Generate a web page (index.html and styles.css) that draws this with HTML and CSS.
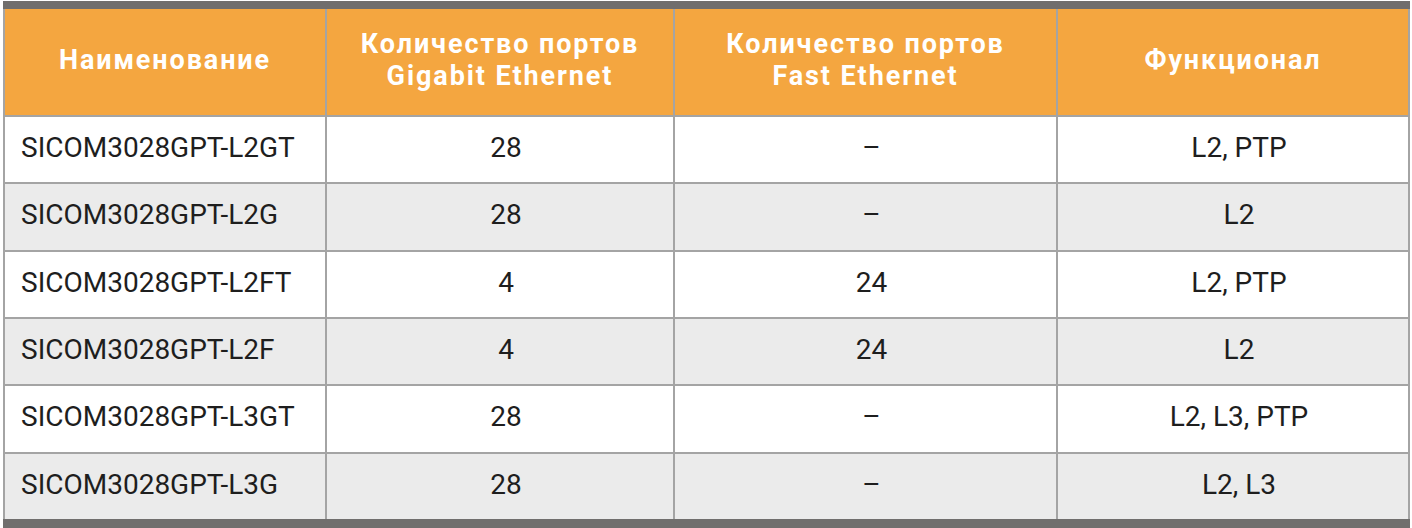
FILE: index.html
```html
<!DOCTYPE html>
<html lang="ru">
<head>
<meta charset="utf-8">
<link rel="stylesheet" href="styles.css">
</head>
<body>
<table class="spec">
  <colgroup>
    <col class="c1"><col class="c2"><col class="c3"><col class="c4">
  </colgroup>
  <thead>
    <tr class="head">
      <th>Наименование</th>
      <th>Количество портов<br>Gigabit Ethernet</th>
      <th>Количество портов<br>Fast Ethernet</th>
      <th>Функционал</th>
    </tr>
  </thead>
  <tbody>
    <tr><td class="name">SICOM3028GPT-L2GT</td><td>28</td><td>–</td><td>L2, PTP</td></tr>
    <tr class="alt tall"><td class="name">SICOM3028GPT-L2G</td><td>28</td><td>–</td><td>L2</td></tr>
    <tr><td class="name">SICOM3028GPT-L2FT</td><td>4</td><td>24</td><td>L2, PTP</td></tr>
    <tr class="alt"><td class="name">SICOM3028GPT-L2F</td><td>4</td><td>24</td><td>L2</td></tr>
    <tr class="tall"><td class="name">SICOM3028GPT-L3GT</td><td>28</td><td>–</td><td>L2, L3, PTP</td></tr>
    <tr class="alt"><td class="name">SICOM3028GPT-L3G</td><td>28</td><td>–</td><td>L2, L3</td></tr>
  </tbody>
</table>
</body>
</html>
```
FILE: styles.css
```css
html, body {
  margin: 0;
  padding: 0;
  background: #ffffff;
}
body {
  padding: 1px 0 0 3px;
}
.spec {
  border-collapse: collapse;
  width: 1405px;
  table-layout: fixed;
  font-family: Roboto, "Liberation Sans", sans-serif;
  border-top: 8px solid #706e6d;
  border-bottom: 9px solid #706e6d;
}
.c1 { width: 322px; }
.c2 { width: 348px; }
.c3 { width: 383px; }
.c4 { width: 352px; }

.spec th, .spec td {
  border-left: 2px solid #a4a4a4;
  border-right: 2px solid #a4a4a4;
  border-bottom: 2px solid #a4a4a4;
  padding: 0;
}
.head th {
  background: #f4a640;
  color: #ffffff;
  font-weight: 700;
  font-size: 27px;
  line-height: 32px;
  letter-spacing: 1.9px;
  height: 102px;
  text-align: center;
  vertical-align: middle;
  padding-bottom: 4px;
}
.spec td {
  height: 60px;
  font-size: 28px;
  color: #1e1e1e;
  text-align: center;
  vertical-align: middle;
  padding: 0 0 5px 12px;
  background: #ffffff;
}
.spec tr.tall td {
  height: 61px;
}
.spec td.name {
  text-align: left;
  padding-left: 16px;
}
.spec tr.alt td {
  background: #ebebeb;
}
.spec tbody tr:last-child td {
  border-bottom: none;
}
```
